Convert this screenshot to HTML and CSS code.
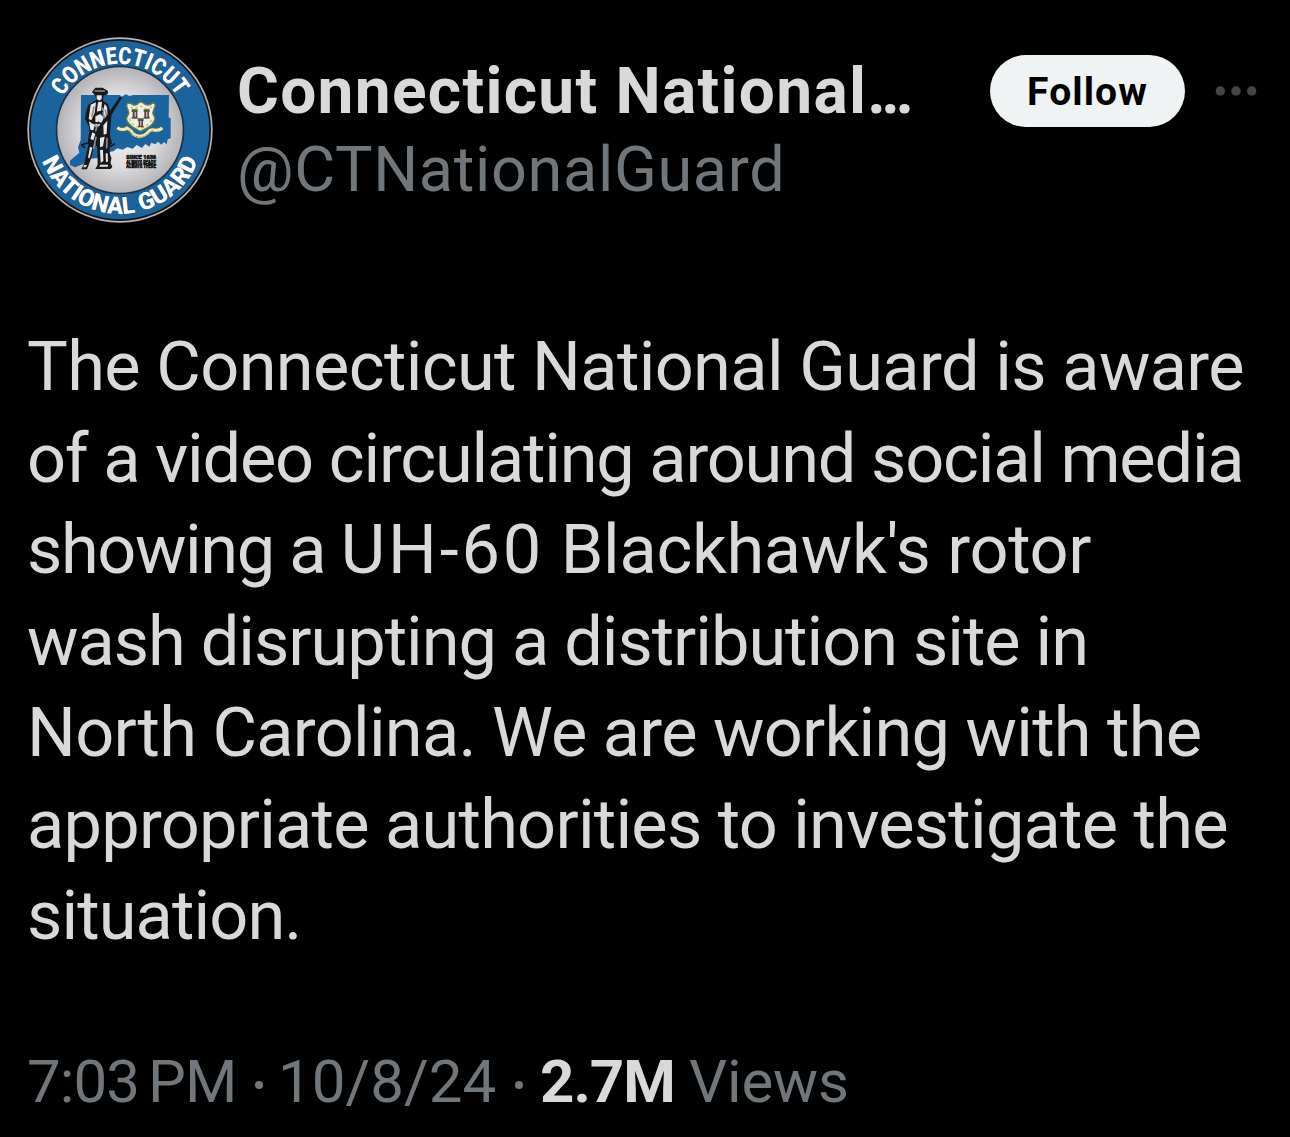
FILE: index.html
```
<!DOCTYPE html>
<html lang="en">
<head>
    <meta charset="UTF-8">
    <title>Connecticut National Guard</title>
    <link rel="stylesheet" href="styles.css">
</head>
<body>
    <article class="post">
        <header class="post-header">
            <svg class="avatar" viewBox="21 21 558 558">
                <defs>
                    <radialGradient id="silver">
                        <stop offset="0" stop-color="#f2f2f3"/>
                        <stop offset="0.6" stop-color="#dcdcde"/>
                        <stop offset="1" stop-color="#b4b4b7"/>
                    </radialGradient>
                    <path id="arc-top" d="M 131 406 A 199 199 0 1 1 469 406"/>
                    <path id="arc-bottom" d="M 48 300 A 252 252 0 0 0 552 300"/>
                </defs>
                <!-- rings -->
                <circle cx="300" cy="300" r="278" fill="#b9b5ae"/>
                <circle cx="300" cy="300" r="273" fill="#10161c"/>
                <circle cx="300" cy="300" r="268" fill="#1a639c"/>
                <circle cx="300" cy="300" r="193" fill="#17324b"/>
                <circle cx="300" cy="300" r="188" fill="url(#silver)"/>
                <!-- state map -->
                <path fill="#1a659f" d="M183 195 H300 L304 200 L318 193 L328 198 L340 195 H447 L446 262 L452 265 V325 L443 328 L440 343 L432 336 L424 344 L414 335 L406 343 L394 338 L388 350 L376 342 L366 354 L350 345 L338 356 L322 351 L308 359 L292 355 L280 364 L255 368 L236 384 L210 386 L190 402 L165 412 L150 405 L150 392 L178 368 L174 352 L182 330 Z"/>
                <!-- minuteman -->
                <g stroke-linejoin="round" stroke-linecap="round">
                    <path fill="#18191b" d="M216 186 L226 173 H248 L264 183 L263 193 L251 197 L249 212 L264 223 L270 244 L299 200 L307 202 L274 256 L270 315 L276 340 L269 349 L270 396 L277 410 L272 417 H226 L233 404 L232 354 L224 337 L215 380 L206 405 L201 418 H184 L193 400 L205 345 L204 330 L208 306 L207 290 L195 267 L198 246 L205 224 L229 210 L226 197 Z"/>
                    <path fill="#e6e6e7" d="M230 196 h15 v11 l-7 5 -8 -5z M212 224 l16 -7 -4 32 -10 22 -8 -4z M234 217 l12 -2 -3 31 -13 2z M254 221 l7 10 2 27 -8 8 -6 -22z M207 274 l18 10 -5 17 -9 -2z M226 259 l15 -7 10 10 -8 25 -17 5z M250 286 l12 -14 -2 39 -9 3z M217 307 l9 5 -6 19 -9 -4z M240 323 l14 -3 -5 29 -9 3z M210 350 l7 3 -8 32 -5 -2z M240 360 l9 -1 1 34 -8 5z M257 371 l6 -3 1 27 -6 1z M193 405 h8 l-4 7 h-7z M241 404 h23 l5 6 h-31z"/>
                    <path fill="none" stroke="#8d8e91" stroke-width="5" d="M225 183 h28 M222 231 l-6 28 M235 275 l-8 27 M261 326 l-1 27 M228 322 l-7 33 M247 235 l5 30 M256 241 l4 18"/>
                    <path fill="none" stroke="#18191b" stroke-width="5" d="M302 203 L239 290 M232 247 l15 -3 M215 277 l34 4 M271 350 l12 -8 M193 352 l-8 -7 10 -4 14 -2 M263 364 l9 20 -7 30"/>
                </g>
                <!-- coat of arms -->
                <path fill="#eef0e8" stroke="#66843f" stroke-width="4" d="M321 231 Q317 218 331 220 Q344 231 354 221 Q363 211 373 222 Q387 230 398 219 Q410 220 403 234 L398 249 L405 265 Q400 286 377 296 L361 304 L345 295 Q323 283 319 266 L327 249 Z"/>
                <path fill="none" stroke="#cfbf47" stroke-width="4" stroke-dasharray="9 7" d="M332 229 Q341 243 354 231 Q364 225 374 235 Q387 241 396 229 M328 265 Q335 285 361 295 Q389 286 396 267"/>
                <g fill="#4f5a38">
                    <path d="M335 238 h18 v8 h-18z M371 238 h18 v8 h-18z M353 265 h18 v8 h-18z"/>
                    <path fill="#653553" d="M338 246 h6 v17 h-6z M347 246 h5 v16 h-5z M373 246 h6 v17 h-6z M382 246 h5 v17 h-5z M356 272 h5 v17 h-5z M364 272 h5 v16 h-5z"/>
                    <path d="M335 260 h18 v6 h-18z M371 260 h18 v6 h-18z M354 287 h17 v5 h-17z"/>
                </g>
                <path fill="none" stroke="#57733e" stroke-width="13" d="M292 293 Q306 304 321 294 Q334 301 340 312 Q360 327 381 310 Q392 296 402 300 Q416 303 427 294"/>
                <path fill="none" stroke="#eee9bc" stroke-width="9" d="M292 293 Q306 304 321 294 Q334 301 340 312 Q360 327 381 310 Q392 296 402 300 Q416 303 427 294"/>
                <path fill="none" stroke="#87854c" stroke-width="3" stroke-dasharray="5 5" d="M326 300 Q336 310 342 316 Q360 327 380 314 Q391 303 400 301"/>
                <!-- motto -->
                <g class="motto">
                    <text x="319" y="387" textLength="89" lengthAdjust="spacingAndGlyphs">SINCE 1636</text>
                    <text x="319" y="401" textLength="89" lengthAdjust="spacingAndGlyphs">ALWAYS READY</text>
                    <text x="319" y="415" textLength="89" lengthAdjust="spacingAndGlyphs">ALWAYS THERE</text>
                </g>
                <g class="seal-text">
                    <text textLength="412" lengthAdjust="spacingAndGlyphs"><textPath href="#arc-top" startOffset="50%">CONNECTICUT</textPath></text>
                    <text textLength="602" lengthAdjust="spacingAndGlyphs"><textPath href="#arc-bottom" startOffset="50%">NATIONAL GUARD</textPath></text>
                </g>
            </svg>
            <div class="author">
                <div class="name">Connecticut National<span class="ellipsis">...</span></div>
                <div class="handle">@CTNationalGuard</div>
            </div>
            <div class="actions">
                <button class="follow">Follow</button>
                <svg class="more" viewBox="0 0 42 12">
                    <circle cx="5.3" cy="6" r="4.7"/>
                    <circle cx="21" cy="6" r="4.7"/>
                    <circle cx="36.7" cy="6" r="4.7"/>
                </svg>
            </div>
        </header>

        <p class="content">
            <span class="line line-1">The Connecticut National Guard is aware</span>
            <span class="line line-2">of a video circulating around social media</span>
            <span class="line line-3"><span class="tight">showing a </span><span class="model">UH-60</span> Blackhawk's rotor</span>
            <span class="line line-4">wash disrupting a distribution site in</span>
            <span class="line line-5">North Carolina. We are working with the</span>
            <span class="line line-6">appropriate authorities to investigate the</span>
            <span class="line line-7">situation.</span>
        </p>

        <footer class="meta">
            <span class="time">7:03 PM</span>
            <span class="dot"></span>
            <span class="date">10/8/24</span>
            <span class="dot"></span>
            <span class="count">2.7M</span>
            <span class="views">Views</span>
        </footer>
    </article>
</body>
</html>
```
FILE: styles.css
```
html, body {
    margin: 0;
    padding: 0;
    height: 100%;
    background: #000;
    font-family: Roboto, "Liberation Sans", sans-serif;
    color: #d9d9d9;
    overflow: hidden;
}

.post {
    padding: 37px 0 0 27px;
}

.post-header {
    display: flex;
    height: 186px;
}

.avatar {
    width: 186px;
    height: 186px;
    flex-shrink: 0;
}

.seal-text {
    font-size: 72px;
    font-weight: 900;
    fill: #fff;
    stroke: #123456;
    stroke-width: 2px;
    paint-order: stroke;
    text-anchor: middle;
}

.motto {
    font-size: 15px;
    font-weight: 900;
    fill: #111;
    stroke: #111;
    stroke-width: 1.5px;
}

.author {
    width: 753px;
    box-sizing: border-box;
    padding: 16px 0 0 24px;
    white-space: nowrap;
    line-height: 78px;
    font-size: 63px;
}

.name {
    font-size: 64px;
    font-weight: 700;
    letter-spacing: 1.3px;
}

.ellipsis {
    letter-spacing: -4.4px;
}

.handle {
    color: #71767b;
    letter-spacing: 0.65px;
}

.actions {
    display: flex;
    align-items: center;
    gap: 30px;
    height: 72px;
    margin-top: 18px;
    margin-left: 24px;
}

.follow {
    width: 195px;
    height: 72px;
    padding: 2px 0 0;
    border: none;
    border-radius: 36px;
    background: #eff3f4;
    color: #000;
    font-family: inherit;
    font-size: 39px;
    font-weight: 700;
    letter-spacing: 1.1px;
}

.more {
    width: 42px;
    height: 12px;
    fill: #46464a;
}

.content {
    margin: 98px 0 0;
    font-size: 68.5px;
    line-height: 91.5px;
}

.line {
    display: block;
    white-space: nowrap;
}

.line-1 {
    letter-spacing: -0.65px;
}

.line-2 {
    letter-spacing: -1.2px;
}

.line-3 {
    letter-spacing: -0.3px;
}

.tight {
    letter-spacing: -1.4px;
}

.model {
    letter-spacing: 2.8px;
}

.line-4 {
    letter-spacing: -1.02px;
}

.line-5 {
    letter-spacing: -0.74px;
}

.line-6 {
    letter-spacing: -0.76px;
}

.line-7 {
    letter-spacing: -0.9px;
}

.meta {
    display: flex;
    align-items: center;
    margin-top: 80px;
    line-height: 80px;
    font-size: 60px;
    color: #71767b;
    white-space: nowrap;
}

.time {
    width: 228px;
    word-spacing: -5px;
    letter-spacing: -0.9px;
}

.dot {
    width: 8px;
    height: 8px;
    margin-top: 6px;
    border-radius: 50%;
    background: #71767b;
}

.date {
    width: 237px;
    margin-left: 15px;
}

.count {
    width: 132px;
    margin-left: 17px;
    font-weight: 700;
    letter-spacing: -1px;
    color: #d9d9d9;
}

.views {
    margin-left: 17px;
    letter-spacing: -0.2px;
}
```
